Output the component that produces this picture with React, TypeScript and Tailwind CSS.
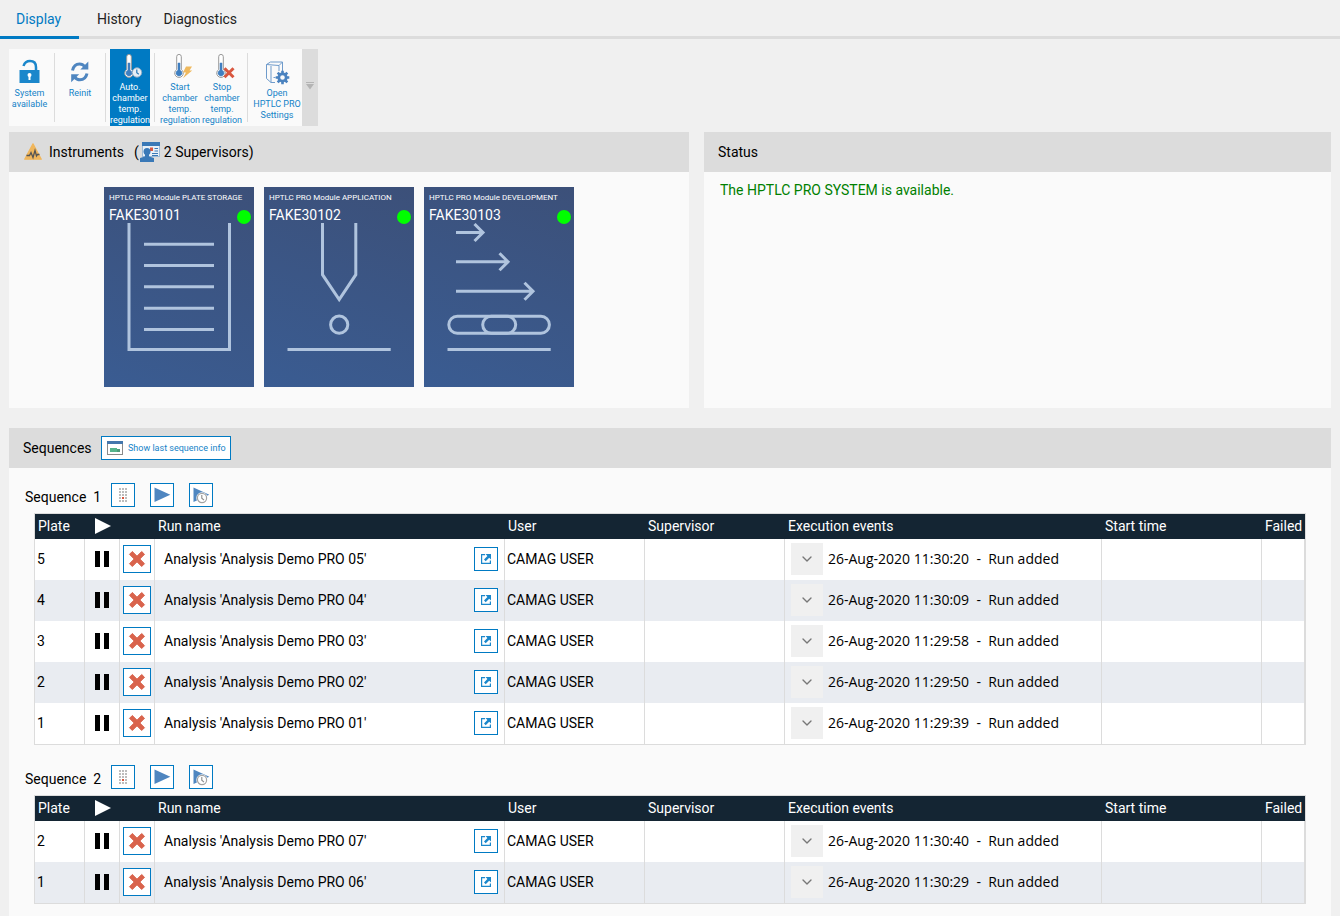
import React from 'react';
import { ChevronDown } from 'lucide-react';

interface Run {
  plate: number;
  name: string;
  user: string;
  date: string;
  event: string;
}

interface Sequence {
  id: number;
  runs: Run[];
}

const makeRun = (plate: number, demo: string, time: string): Run => ({
  plate,
  name: `Analysis 'Analysis Demo PRO ${demo}'`,
  user: 'CAMAG USER',
  date: `26-Aug-2020 ${time}`,
  event: 'Run added',
});

const sequences: Sequence[] = [
  {
    id: 1,
    runs: [
      makeRun(5, '05', '11:30:20'),
      makeRun(4, '04', '11:30:09'),
      makeRun(3, '03', '11:29:58'),
      makeRun(2, '02', '11:29:50'),
      makeRun(1, '01', '11:29:39'),
    ],
  },
  {
    id: 2,
    runs: [makeRun(2, '07', '11:30:40'), makeRun(1, '06', '11:30:29')],
  },
];

/* ---------- Toolbar icons ---------- */

const LockIcon = () => (
  <svg width="26" height="26" viewBox="0 0 26 26">
    <path d="M6.500 7C7.500 3.800 9.500 2 13 2c4 0 6 2.700 6 6.200V12" fill="none" stroke="#1b87cb" strokeWidth="2.500" />
    <rect x="2.500" y="11" width="20" height="13" fill="#1b87cb" />
    <circle cx="12.500" cy="16" r="2" fill="#fff" />
    <path d="M11.500 16h2v5h-2z" fill="#fff" />
  </svg>
);

const ReinitIcon = () => (
  <svg width="26" height="26" viewBox="0 0 26 26">
    <g fill="none" stroke="#4f86c0" strokeWidth="3">
      <path d="M5.500 11.500C6.500 7 9.500 5 12.500 5c2.500 0 4 1 5.500 2.800" />
      <path d="M20 14.500C19 19 16 20.800 13 20.800c-2.500 0-4-1-5.500-2.800" />
    </g>
    <path d="M21.300 2.500v8h-8z" fill="#4f86c0" />
    <path d="M4.200 23.300v-8h8z" fill="#4f86c0" />
  </svg>
);

const Thermometer = ({ children }: { children: React.ReactNode }) => (
  <svg width="26" height="26" viewBox="0 0 26 26">
    <path
      d="M9.700 16.500V3.700a2.300 2.300 0 0 1 4.600 0v12.800a4.300 4.300 0 1 1-4.600 0z"
      fill="#fff"
      stroke="#999"
      strokeWidth="1"
    />
    <path d="M11 10h2v7.200a3 3 0 1 1-2 0z" fill="#3f7fc0" stroke="#3f7fc0" strokeWidth="0.500" />
    {children}
  </svg>
);

const AutoTempIcon = () => (
  <Thermometer>
    <circle cx="20" cy="19.500" r="4.700" fill="#e8eef4" stroke="#8aa9c4" />
    <path d="M19.800 16.500v3.300l2 1.400" fill="none" stroke="#2a78b5" strokeWidth="1.200" />
  </Thermometer>
);

const StartTempIcon = () => (
  <Thermometer>
    <path d="M19 13.500h6l-2.500 4h2.700L16 25.200l3-5.700h-3z" fill="#efb95e" />
  </Thermometer>
);

const StopTempIcon = () => (
  <Thermometer>
    <path d="M15.500 15.200l9 9M24.500 15.200l-9 9" stroke="#d9573f" strokeWidth="3" />
  </Thermometer>
);

const SettingsIcon = () => (
  <svg width="26" height="26" viewBox="0 0 26 26">
    <g fill="none" stroke="#6f9bcb" strokeWidth="1">
      <path d="M2.500 5.500l4-2.500h12l-3.500 3.500z" />
      <path d="M2.500 5.500v14l4.500 4V7" />
      <path d="M15 6.500V12M18.500 3v9M7 23.500h4M9.500 18.500h2" />
    </g>
    <circle cx="18.500" cy="18.500" r="3.700" fill="none" stroke="#4a82bf" strokeWidth="2.800" />
    <g stroke="#4a82bf" strokeWidth="2.600">
      <path d="M18.500 11.700v2.600M18.500 22.700v2.600M11.700 18.500h2.600M22.700 18.500h2.600" />
      <path d="M13.700 13.700l1.800 1.800M21.500 21.500l1.800 1.800M13.700 23.300l1.800-1.800M21.500 15.500l1.800-1.800" />
    </g>
  </svg>
);

/* ---------- Small icons ---------- */

const WarningIcon = () => (
  <svg width="18" height="17" viewBox="0 0 18 17">
    <path d="M9 .8L17.300 16.200H.7z" fill="#f0b65c" stroke="#f0b65c" strokeWidth="1.200" strokeLinejoin="round" />
    <path d="M2.500 12.500h3L7 9.500l2 5 2-7 1.500 5.500 1-1.500h2" fill="none" stroke="#555" strokeWidth="1.300" />
  </svg>
);

const SupervisorIcon = () => (
  <svg width="20" height="20" viewBox="0 0 20 20">
    <rect x="2.500" y="0.500" width="17" height="14" fill="#e9f1f8" stroke="#9dbbd8" />
    <path d="M2 0h18v4H2z" fill="#3a79b7" />
    <path d="M10 5.500h3v3.500h-3z" fill="#d9573f" />
    <path d="M14.500 6.500H18M14.500 9H18M12 11.500h6M12 13.500h6" stroke="#3a79b7" strokeWidth="1.200" />
    <circle cx="7" cy="9.500" r="3.500" fill="#3a79b7" />
    <path d="M5 11h4v3.500l5 1.500v4H0v-4l5-1.500z" fill="#3a79b7" />
  </svg>
);

const WindowIcon = () => (
  <svg width="16" height="14" viewBox="0 0 16 14">
    <rect x="0.500" y="0.500" width="15" height="13" fill="#fff" stroke="#8a8a8a" />
    <path d="M0 0h16v3H0z" fill="#4477ad" />
    <path d="M3 7h7v4H3z" fill="#55b58c" />
    <path d="M10 8h3v3h-3z" fill="#4d9b7a" />
  </svg>
);

const GridIcon = () => (
  <svg width="8" height="14" viewBox="0 0 8 14">
    {[0, 3, 6, 9, 12].map((y) =>
      [0, 3, 6].map((x) => (
        <rect key={`${x}-${y}`} x={x} y={y} width="2" height="2" fill={x === 3 && y === 9 ? '#d9573f' : '#bdbdbd'} />
      ))
    )}
  </svg>
);

const PlayIcon = () => (
  <svg width="22" height="22" viewBox="0 0 22 22">
    <path d="M3.500 3.500L19.300 10.800L3.500 18z" fill="#4f86c0" />
  </svg>
);

const PlayClockIcon = () => (
  <svg width="22" height="22" viewBox="0 0 22 22">
    <path d="M3.500 3.500L19.300 10.800L3.500 18z" fill="#4f86c0" />
    <circle cx="12" cy="14" r="5.700" fill="#fff" />
    <circle cx="12" cy="14" r="4.600" fill="#fff" stroke="#a3a3a3" strokeWidth="1.200" />
    <path d="M11.800 11v3.200l2.200 2" fill="none" stroke="#8a8a8a" strokeWidth="1.100" />
  </svg>
);

const DeleteIcon = () => (
  <svg width="18" height="18" viewBox="0 0 18 18">
    <path
      d="M4.300 1.500L9 6.200l4.700-4.700 2.800 2.800L11.800 9l4.700 4.700-2.800 2.800L9 11.800l-4.700 4.700-2.800-2.800L6.200 9 1.500 4.300z"
      fill="#d9634c"
      stroke="#d9634c"
      strokeWidth="1"
      strokeLinejoin="round"
    />
  </svg>
);

const OpenIcon = () => (
  <svg width="10" height="10" viewBox="0 0 10 10">
    <path d="M4 .600H.600v8.800h8.800V6.500" fill="none" stroke="#1b87cb" strokeWidth="1.200" />
    <path d="M4.500 0H10v5.500L8.200 3.700 4.700 7.200 3 5.500l3.400-3.600z" fill="#1b87cb" />
  </svg>
);

const PauseIcon = () => (
  <svg width="14" height="16" viewBox="0 0 14 16">
    <path d="M0 0h5v16H0zM9 0h5v16H9z" fill="#000" />
  </svg>
);

/* ---------- Instrument drawings ---------- */

const Drawing = ({ children }: { children: React.ReactNode }) => (
  <svg className="block" width="150" height="164" viewBox="0 0 150 164" fill="none" stroke="#b0c4de" strokeWidth="3">
    {children}
  </svg>
);

const StorageDrawing = () => (
  <Drawing>
    <path d="M25 0v126.500h100.500V0" />
    <path d="M40 21.200h70M40 42.500h70M40 63.800h70M40 85.200h70M40 106.500h70" />
  </Drawing>
);

const ApplicationDrawing = () => (
  <Drawing>
    <path d="M58.500 0v51.700L75.200 76.500l16.600-24.800V0" />
    <circle cx="75.200" cy="101.700" r="8.600" />
    <path d="M23.500 126.500h103.200" />
  </Drawing>
);

const DevelopmentDrawing = () => (
  <Drawing>
    <path d="M32 9.500H58.500M50.500 1l8.500 8.500-8.500 8.500" />
    <path d="M32 38.800H83.500M75.500 30.300l8.500 8.500-8.500 8.500" />
    <path d="M32 68.200H108.500M100.500 59.700l8.500 8.500-8.500 8.500" />
    <rect x="24.800" y="93.200" width="100.600" height="17" rx="8.500" />
    <rect x="58.700" y="93.200" width="33" height="17" rx="8.500" />
    <path d="M23.500 126.500h103.200" />
  </Drawing>
);

const instruments = [
  { title: 'HPTLC PRO Module PLATE STORAGE', serial: 'FAKE30101', drawing: StorageDrawing },
  { title: 'HPTLC PRO Module APPLICATION', serial: 'FAKE30102', drawing: ApplicationDrawing },
  { title: 'HPTLC PRO Module DEVELOPMENT', serial: 'FAKE30103', drawing: DevelopmentDrawing },
];

/* ---------- Pieces ---------- */

const Separator = () => <div className="mx-1 my-1 w-px shrink-0 bg-[#dcdcdc]" />;

function ToolButton({
  icon: Icon,
  lines,
  className,
  active = false,
}: {
  icon: React.ElementType;
  lines: string[];
  className: string;
  active?: boolean;
}) {
  return (
    <button
      type="button"
      className={`flex shrink-0 flex-col items-center text-[9px] leading-[11px] whitespace-nowrap ${active ? 'bg-[#007ac3] text-white' : 'text-[#1583c8]'} ${className}`}
    >
      <Icon />
      <span className="mt-[3px] flex flex-col items-center">
        {lines.map((line) => (
          <span key={line}>{line}</span>
        ))}
      </span>
    </button>
  );
}

function SquareButton({ label, className, children }: { label: string; className: string; children: React.ReactNode }) {
  return (
    <button
      type="button"
      aria-label={label}
      className={`flex shrink-0 items-center justify-center border border-[#007ac3] bg-white ${className}`}
    >
      {children}
    </button>
  );
}

function SequenceTable({ sequence }: { sequence: Sequence }) {
  const cell = 'border-r border-[#dcdcdc] p-0 pb-px';

  return (
    <section>
      <div className="flex items-center">
        <h3 className="mt-1 mr-[10px] ml-4 w-[76px] whitespace-pre">Sequence{'  '}{sequence.id}</h3>
        <div className="flex gap-[15px]">
          <SquareButton label="Plate layout" className="size-6">
            <GridIcon />
          </SquareButton>
          <SquareButton label="Start sequence" className="size-6">
            <PlayIcon />
          </SquareButton>
          <SquareButton label="Schedule sequence" className="size-6">
            <PlayClockIcon />
          </SquareButton>
        </div>
      </div>

      <div className="mt-[6px] mr-[9px] ml-[25px] border border-[#dcdcdc]">
        <table className="w-full table-fixed border-separate border-spacing-0">
          <colgroup>
            <col className="w-[50px]" />
            <col className="w-[35px]" />
            <col className="w-[35px]" />
            <col />
            <col className="w-[140px]" />
            <col className="w-[140px]" />
            <col className="w-[317px]" />
            <col className="w-[160px]" />
            <col className="w-[43px]" />
          </colgroup>
          <thead>
            <tr className="h-[25px] bg-[#142533] text-left text-white [&>th]:px-[3px] [&>th]:pt-0 [&>th]:pb-px [&>th]:font-normal">
              <th>Plate</th>
              <th aria-label="State">
                <svg className="mx-auto" width="16" height="16" viewBox="0 0 16 16">
                  <path d="M0 0l16 8-16 8z" fill="#fff" />
                </svg>
              </th>
              <th aria-label="Remove" />
              <th>Run name</th>
              <th>User</th>
              <th>Supervisor</th>
              <th>Execution events</th>
              <th>Start time</th>
              <th>Failed</th>
            </tr>
          </thead>
          <tbody>
            {sequence.runs.map((run) => (
              <tr key={run.plate} className="h-[41px] bg-white even:bg-[#e9ecf1]">
                <td className={cell}>
                  <span className="pl-[2px]">{run.plate}</span>
                </td>
                <td className={cell}>
                  <button type="button" aria-label="Pause" className="mx-auto block">
                    <PauseIcon />
                  </button>
                </td>
                <td className={cell}>
                  <div className="flex justify-center">
                    <SquareButton label="Remove run" className="size-7">
                      <DeleteIcon />
                    </SquareButton>
                  </div>
                </td>
                <td className={cell}>
                  <div className="flex items-center justify-between pr-[6px] pl-[9px]">
                    {run.name}
                    <SquareButton label="Open analysis" className="size-6">
                      <OpenIcon />
                    </SquareButton>
                  </div>
                </td>
                <td className={cell}>
                  <span className="pl-[2px]">{run.user}</span>
                </td>
                <td className={cell} />
                <td className={cell}>
                  <div className="flex items-center pl-[6px] font-['Open_Sans',sans-serif]">
                    <button
                      type="button"
                      aria-label="Show events"
                      className="mr-[5px] flex size-8 items-center justify-center bg-[#f0f0f0] text-[#777]"
                    >
                      <ChevronDown size={16} strokeWidth={2} />
                    </button>
                    <span className="whitespace-pre">
                      {run.date}{'  -  '}{run.event}
                    </span>
                  </div>
                </td>
                <td className={cell} />
                <td className={cell} />
              </tr>
            ))}
          </tbody>
        </table>
      </div>
    </section>
  );
}

export default function App() {
  return (
    <div className="flex min-h-screen flex-col bg-[#f0f0f0] font-[Roboto,sans-serif] text-sm text-black">
      {/* Tabs */}
      <nav className="flex border-b-3 border-[#dcdcdc] text-[#222]">
        <a href="#display" className="-mb-[3px] w-[79px] border-b-3 border-[#007ac3] pt-[9px] pb-[7px] pl-4 text-[#007ac3]">
          Display
        </a>
        <a href="#history" className="pt-[9px] pb-[7px] pl-[18px]">
          History
        </a>
        <a href="#diagnostics" className="pt-[9px] pb-[7px] pl-[22px]">
          Diagnostics
        </a>
      </nav>

      {/* Toolbar */}
      <div className="mt-[10px] ml-[9px] flex h-[77px] self-start bg-[#fafafa]">
        <ToolButton icon={LockIcon} lines={['System', 'available']} className="w-[41px] pt-[10px]" />
        <Separator />
        <ToolButton icon={ReinitIcon} lines={['Reinit']} className="w-[42px] pt-[10px]" />
        <Separator />
        <ToolButton icon={AutoTempIcon} lines={['Auto.', 'chamber', 'temp.', 'regulation']} className="w-[40px] pt-1" active />
        <Separator />
        <ToolButton icon={StartTempIcon} lines={['Start', 'chamber', 'temp.', 'regulation']} className="w-[42px] pt-1" />
        <ToolButton icon={StopTempIcon} lines={['Stop', 'chamber', 'temp.', 'regulation']} className="w-[42px] pt-1" />
        <Separator />
        <ToolButton icon={SettingsIcon} lines={['Open', 'HPTLC PRO', 'Settings']} className="w-[50px] pt-[10px]" />
        <button type="button" aria-label="More tools" className="flex w-4 items-center justify-center bg-[#dcdcdc] pb-1">
          <svg width="8" height="8" viewBox="0 0 8 8" fill="#b4b4b4">
            <path d="M0 0h8v1H0zM0 2h8L4 7.500z" />
          </svg>
        </button>
      </div>

      {/* Instruments and status */}
      <div className="mt-[6px] mr-[9px] ml-[9px] flex gap-[15px]">
        <section className="h-[276px] flex-[680] bg-[#fafafa]">
          <header className="flex h-10 items-center bg-[#dcdcdc] pb-px pl-[15px]">
            <WarningIcon />
            <h2 className="ml-[7px]">Instruments</h2>
            <span className="mr-px ml-[10px]">(</span>
            <SupervisorIcon />
            <span className="ml-1">2 Supervisors)</span>
          </header>
          <div className="flex justify-center gap-[10px] pt-[15px] pr-5">
            {instruments.map(({ title, serial, drawing: DrawingIcon }) => (
              <article
                key={serial}
                className="relative h-[200px] w-[150px] bg-linear-[200deg] from-[#3c5079] to-[#3a5c92] text-white"
              >
                <div className="h-9 pt-[6px] pl-[5px] whitespace-nowrap">
                  <div className="text-[8px] leading-[10px]">{title}</div>
                  <div className="mt-1 leading-4">{serial}</div>
                </div>
                <DrawingIcon />
                <span className="absolute top-[23px] right-[3px] size-[14px] rounded-full bg-[#00ff00]" />
              </article>
            ))}
          </div>
        </section>
        <section className="flex-[627] bg-[#fafafa]">
          <header className="flex h-10 items-center bg-[#dcdcdc] pl-[14px]">
            <h2>Status</h2>
          </header>
          <p className="pt-2 pl-4 text-[#008000]">The HPTLC PRO SYSTEM is available.</p>
        </section>
      </div>

      {/* Sequences */}
      <section className="mt-5 mr-[9px] ml-[9px] flex-1 bg-[#fafafa]">
        <header className="flex h-10 items-center bg-[#dcdcdc] pl-[14px]">
          <h2 className="w-[78px]">Sequences</h2>
          <button
            type="button"
            className="flex h-6 w-[130px] items-center border border-[#007ac3] bg-white pl-[5px] text-[9px] whitespace-nowrap text-[#1583c8]"
          >
            <WindowIcon />
            <span className="ml-[5px]">Show last sequence info</span>
          </button>
        </header>
        <div className="flex flex-col gap-5 pt-[15px] pr-4 pb-3">
          {sequences.map((sequence) => (
            <SequenceTable key={sequence.id} sequence={sequence} />
          ))}
        </div>
      </section>
    </div>
  );
}
